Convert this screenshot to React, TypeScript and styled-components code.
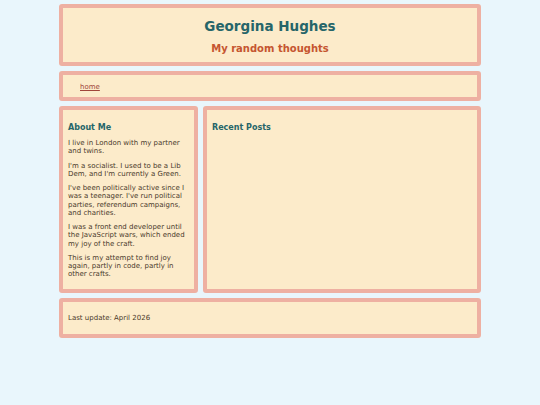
import React from "react";
import styled, { createGlobalStyle } from "styled-components";

const Global = createGlobalStyle`
  html, body { margin: 0; padding: 0; }
  body {
    background: #e9f6fc;
    font-family: "DejaVu Sans", Verdana, sans-serif;
    color: #4a3a2b;
    font-size: 7px;
    line-height: 1.2;
  }
`;

const Page = styled.div`
  width: 422px;
  margin: 0 auto;
  padding-top: 4px;
  display: flex;
  flex-direction: column;
  gap: 5px;
`;

const Box = styled.div`
  background: #fcebca;
  border: 4px solid #eeb0a2;
  border-radius: 3px;
  padding: 5px;
`;

const Header = styled(Box)`
  text-align: center;
`;

const Title = styled.h1`
  margin: 5px 0 9px;
  font-size: 13.5px;
  line-height: 16px;
  font-weight: bold;
  color: #266569;
`;

const Subtitle = styled.h2`
  margin: 0 0 2px;
  font-size: 10px;
  line-height: 12px;
  font-weight: bold;
  color: #c55530;
`;

const Nav = styled(Box)`
  padding: 8px 5px 6px;
`;

const NavList = styled.ul`
  margin: 0;
  padding-left: 12px;
  list-style: none;
  line-height: 8px;
  height: 8px;
`;

const NavLink = styled.a`
  color: #a0453a;
  text-decoration: underline;
  font-size: 7px;
`;

const Main = styled.div`
  display: grid;
  grid-template-columns: 1fr 2fr;
  gap: 5px;
`;

const Heading = styled.h3`
  margin: 7px 0 5px;
  font-size: 8px;
  line-height: 11px;
  font-weight: bold;
  color: #266569;
`;

const Para = styled.p`
  margin: 6px 0;
  font-size: 7px;
  line-height: 8.25px;
`;

const LastPara = styled(Para)`
  margin-bottom: 5px;
`;

const Footer = styled(Box)`
  padding: 6px 5px;
`;

export default function App() {
  return (
    <>
      <Global />
      <Page>
        <Header>
          <Title>Georgina Hughes</Title>
          <Subtitle>My random thoughts</Subtitle>
        </Header>
        <Nav>
          <NavList>
            <li>
              <NavLink href="#">home</NavLink>
            </li>
          </NavList>
        </Nav>
        <Main>
          <Box>
            <Heading>About Me</Heading>
            <Para>I live in London with my partner and twins.</Para>
            <Para>I'm a socialist. I used to be a Lib Dem, and I'm currently a Green.</Para>
            <Para>
              I've been politically active since I was a teenager. I've run political parties,
              referendum campaigns, and charities.
            </Para>
            <Para>
              I was a front end developer until the JavaScript wars, which ended my joy of the
              craft.
            </Para>
            <LastPara>
              This is my attempt to find joy again, partly in code, partly in other crafts.
            </LastPara>
          </Box>
          <Box>
            <Heading>Recent Posts</Heading>
          </Box>
        </Main>
        <Footer>
          <Para>Last update: April 2026</Para>
        </Footer>
      </Page>
    </>
  );
}
